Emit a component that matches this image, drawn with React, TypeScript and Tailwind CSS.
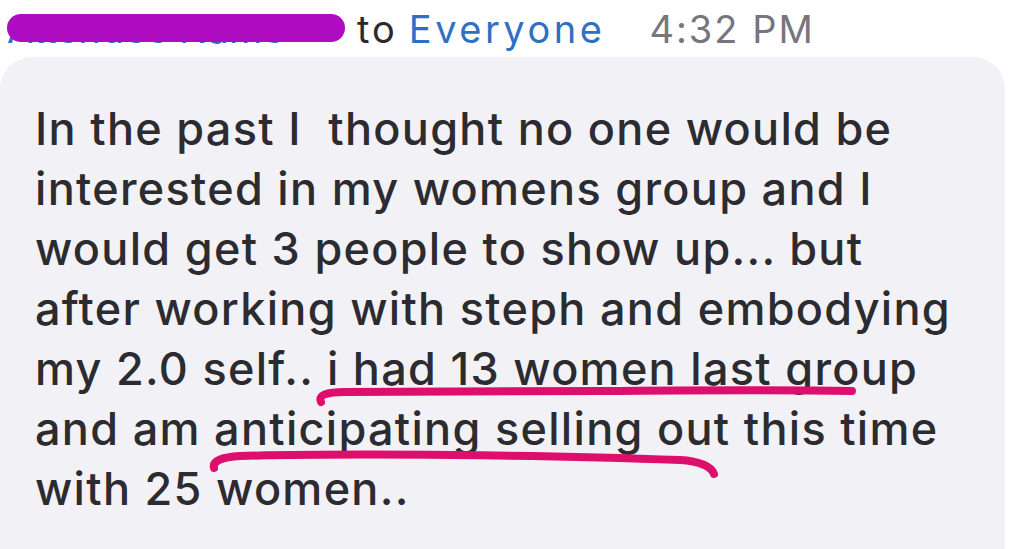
import React from 'react'

const lines = [
    'In the past I\u00a0 thought no one would be',
    'interested in my womens group and I',
    'would get 3 people to show up... but',
    'after working with steph and embodying',
    'my 2.0 self.. i had 13 women last group',
    'and am anticipating selling out this time',
    'with 25 women..',
]

const App = () => {
    return (
        <div className="w-[1018px] h-[549px] overflow-hidden bg-white relative" style={{ fontFamily: 'Inter, "Liberation Sans", Arial, sans-serif' }}>
            {/* Header */}
            <div className="flex items-center h-[57px] pl-[7px] text-[38px] leading-none tracking-[3px]">
                <div className="relative mr-[12px] w-[338px]">
                    <span className="text-[#2f6fc4] whitespace-nowrap tracking-normal">Attendee Name</span>
                    <div className="absolute left-0 right-0 top-[4px] h-[28px] rounded-full bg-[#ad0cc0]" />
                </div>
                <span className="text-[#2a2a2e]">to</span>
                <span className="text-[#2f6fc4] ml-[11px] tracking-[3.5px]">Everyone</span>
                <span className="text-[#76767c] ml-[44px] tracking-[2px]">4:32 PM</span>
            </div>

            {/* Message bubble */}
            <div className="relative w-[1005px] h-[520px] bg-[#f1f1f6] rounded-[32px] pl-[35px] pt-[42px]">
                <div className="text-[45px] leading-[60px] text-[#2b2b30] font-medium tracking-[1.3px]">
                    {lines.map((l) => (
                        <div key={l} className="whitespace-pre">{l}</div>
                    ))}
                </div>

                {/* hand drawn underlines */}
                <svg className="absolute left-0 top-0 pointer-events-none" width="1005" height="520" viewBox="0 0 1005 520">
                    <path
                        d="M321 345 C 318 338, 326 335, 345 335 L 600 334 C 700 333, 800 333, 852 334"
                        fill="none"
                        stroke="#de0f6c"
                        strokeWidth="8"
                        strokeLinecap="round"
                    />
                    <path
                        d="M214 411 C 212 404, 222 400, 240 399 C 350 396, 550 398, 680 403 C 700 404, 712 410, 714 417"
                        fill="none"
                        stroke="#de0f6c"
                        strokeWidth="8"
                        strokeLinecap="round"
                    />
                </svg>
            </div>
        </div>
    )
}

export default App
